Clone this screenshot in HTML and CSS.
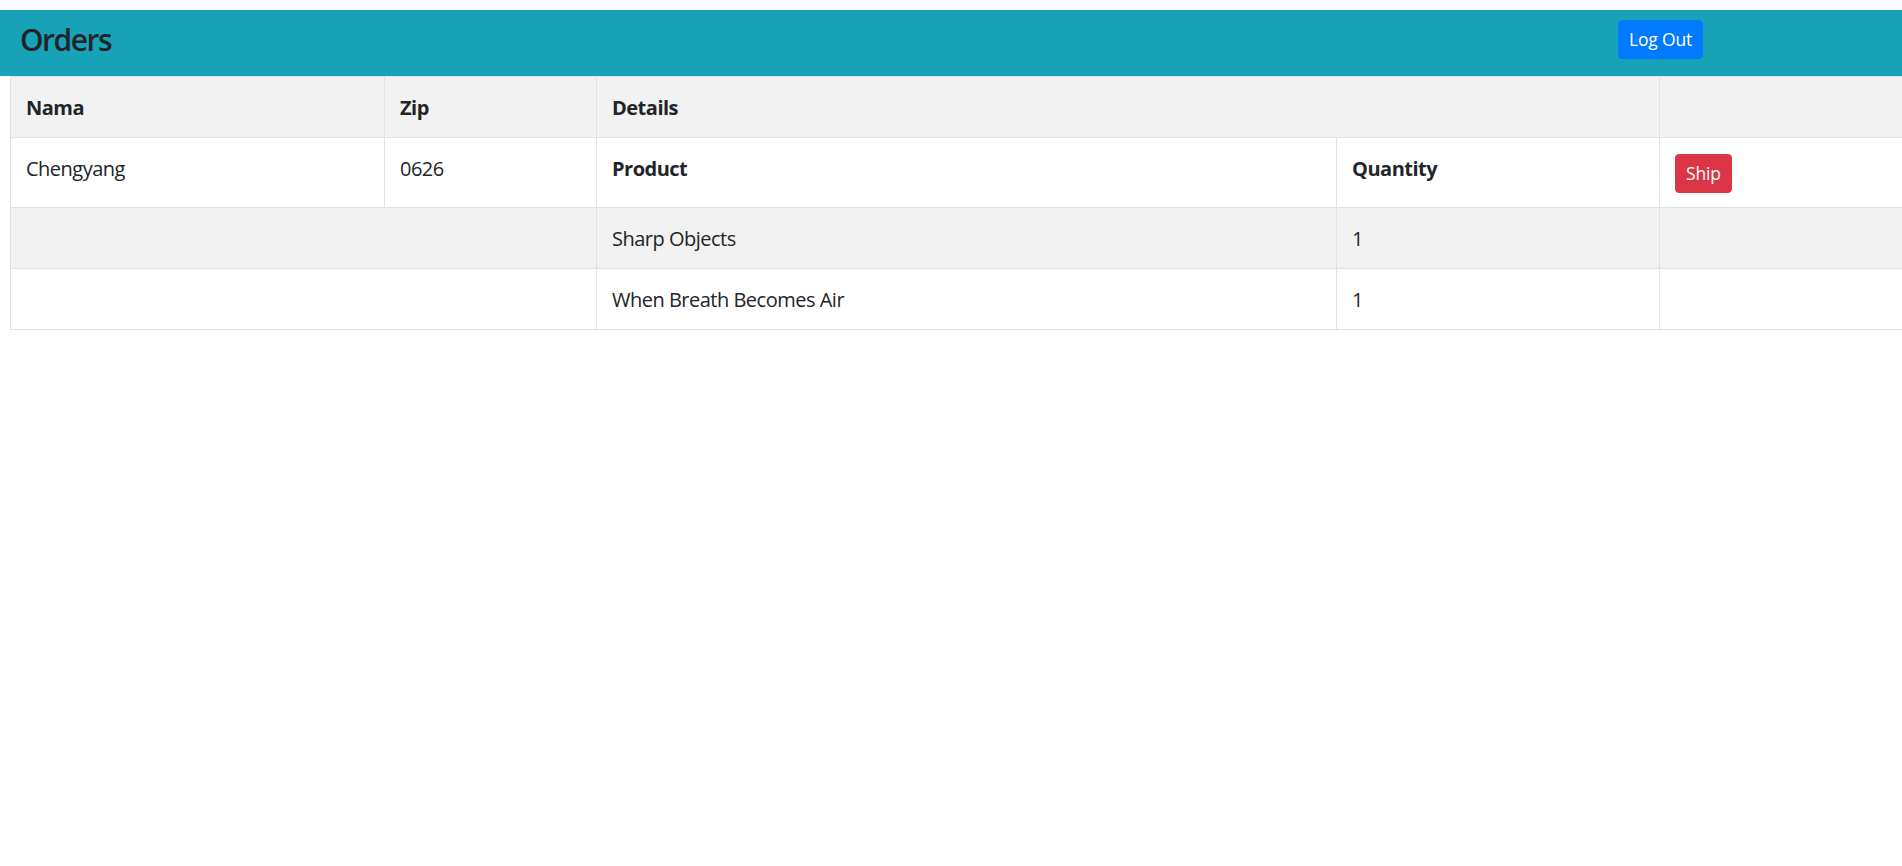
FILE: index.html
```html
<!DOCTYPE html>
<html lang="en">
<head>
<meta charset="utf-8">
<title>Orders</title>
<link rel="stylesheet" href="styles.css">
</head>
<body>
  <header class="topbar">
    <h4 class="title">Orders</h4>
    <button class="btn btn-primary" type="button">Log Out</button>
  </header>
  <table class="orders">
    <colgroup>
      <col class="c-name">
      <col class="c-zip">
      <col class="c-product">
      <col class="c-qty">
      <col class="c-action">
    </colgroup>
    <tbody>
      <tr class="odd">
        <th>Nama</th>
        <th>Zip</th>
        <th colspan="2">Details</th>
        <th></th>
      </tr>
      <tr>
        <td>Chengyang</td>
        <td>0626</td>
        <th>Product</th>
        <th>Quantity</th>
        <td><button class="btn btn-danger" type="button">Ship</button></td>
      </tr>
      <tr class="odd">
        <td colspan="2"></td>
        <td>Sharp Objects</td>
        <td>1</td>
        <td></td>
      </tr>
      <tr>
        <td colspan="2"></td>
        <td>When Breath Becomes Air</td>
        <td>1</td>
        <td></td>
      </tr>
    </tbody>
  </table>
</body>
</html>
```

FILE: styles.css
```css
html, body {
  overflow: hidden;
}
body {
  margin: 10px 0 0 0;
  font-family: "Open Sans", "Noto Sans", sans-serif;
  font-size: 20px;
  line-height: 30px;
  letter-spacing: -0.5px;
  color: #212529;
  background: #fff;
}
.topbar {
  display: flex;
  align-items: flex-start;
  justify-content: space-between;
  background: #17a2b8;
  height: 66px;
  box-sizing: border-box;
  padding: 10px 199px 0 20px;
}
.title {
  margin: 0;
  padding-top: 2px;
  font-size: 30px;
  line-height: 36px;
  font-weight: 600;
  letter-spacing: -1.5px;
  color: #212529;
}
.btn {
  font-family: inherit;
  font-size: 17.5px;
  line-height: 27px;
  letter-spacing: -0.2px;
  padding: 5px 10px;
  border: 1px solid transparent;
  border-radius: 4px;
  color: #fff;
  cursor: pointer;
}
.btn-primary {
  background: #007bff;
  border-color: #007bff;
}
.btn-danger {
  background: #dc3545;
  border-color: #dc3545;
}
.orders {
  margin-left: 10px;
  border-collapse: collapse;
  table-layout: fixed;
  width: 1950px;
}
.c-name { width: 374px; }
.c-zip { width: 212px; }
.c-product { width: 740px; }
.c-qty { width: 323px; }
.c-action { width: 301px; }
.orders th,
.orders td {
  border: 1px solid #dee2e6;
  padding: 16px 15px 14px;
  text-align: left;
  vertical-align: top;
  height: 30px;
}
.orders th {
  font-weight: 700;
}
.orders tr.odd {
  background: #f2f2f2;
}
```
